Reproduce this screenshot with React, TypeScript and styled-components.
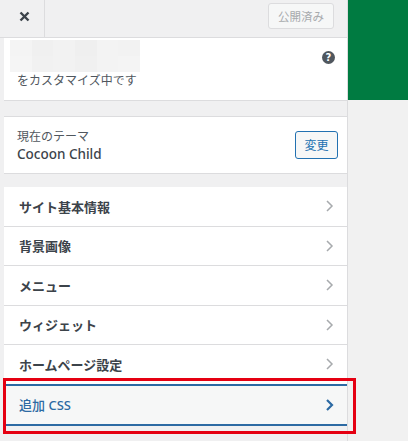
import React from "react";
import styled, { createGlobalStyle } from "styled-components";

const Global = createGlobalStyle`
  html, body { margin: 0; padding: 0; background: #f1f1f1; }
  body { font-family: "Noto Sans", "Noto Sans CJK JP", sans-serif; }
  * { box-sizing: border-box; }
`;

const Page = styled.div`
  display: flex;
  width: 408px;
  height: 441px;
  overflow: hidden;
`;

const Sidebar = styled.div`
  width: 348px;
  flex: none;
  background: #f0f0f1;
  border-right: 1px solid #dcdcde;
  display: flex;
  flex-direction: column;
`;

const Preview = styled.div`
  flex: 1;
  background: #f1f1f1;
`;

const GreenBar = styled.div`
  height: 100px;
  background: #007b41;
`;

const Header = styled.div`
  height: 38px;
  flex: none;
  display: flex;
  align-items: center;
  padding-left: 4px;
  padding-right: 13px;
  border-bottom: 1px solid #dcdcde;
`;

const CloseButton = styled.div`
  width: 41px;
  height: 37px;
  border-right: 1px solid #dcdcde;
  display: flex;
  align-items: center;
  justify-content: center;
  padding-bottom: 4px;
`;

const Spacer = styled.div`
  flex: 1;
`;

const PublishButton = styled.div`
  width: 66px;
  height: 26px;
  margin-top: -6px;
  border: 1px solid #dcdcde;
  border-radius: 3px;
  background: #f6f7f7;
  color: #a7aaad;
  font-size: 11.5px;
  display: flex;
  align-items: center;
  justify-content: center;
`;

const Panel = styled.div<{ $topBorder?: boolean }>`
  margin-left: 4px;
  flex: none;
  background: #fff;
  border-bottom: 1px solid #dcdcde;
  ${(p) => (p.$topBorder ? "border-top: 1px solid #dcdcde;" : "")}
`;

const InfoPanel = styled(Panel)`
  height: 63px;
  display: flex;
  padding: 2px 12px 0 13px;
`;

const InfoText = styled.div`
  flex: 1;
  display: flex;
  flex-direction: column;
`;

const Mosaic = styled.div`
  margin-left: -7px;
  width: 130px;
  height: 32px;
  display: grid;
  grid-template-columns: repeat(6, 1fr);
  grid-template-rows: 1fr 1fr;
`;

const Tile = styled.div<{ $c: string }>`
  background: ${(p) => p.$c};
`;

const Customizing = styled.div`
  font-size: 12px;
  line-height: 16px;
  margin-top: 1px;
  color: #50575e;
`;

const HelpIcon = styled.div`
  width: 13px;
  height: 13px;
  margin-top: 11px;
  border-radius: 50%;
  background: #50575e;
  color: #fff;
  font-family: "DejaVu Sans", sans-serif;
  font-weight: bold;
  font-size: 10px;
  line-height: 13px;
  text-align: center;
`;

const Gap = styled.div<{ $h: number }>`
  height: ${(p) => p.$h}px;
  flex: none;
`;

const ThemePanel = styled(Panel)`
  height: 58px;
  display: flex;
  align-items: center;
  padding: 0 9px 0 13px;
`;

const ThemeInfo = styled.div`
  flex: 1;
  display: flex;
  flex-direction: column;
`;

const ThemeLabel = styled.div`
  font-size: 12px;
  line-height: 17px;
  color: #50575e;
`;

const ThemeName = styled.div`
  font-size: 13.5px;
  line-height: 18px;
  font-weight: 500;
  color: #3c434a;
`;

const ChangeButton = styled.div`
  width: 43px;
  height: 28px;
  border: 1px solid #2271b1;
  border-radius: 3px;
  background: #f6f7f7;
  color: #2271b1;
  font-size: 12px;
  display: flex;
  align-items: center;
  justify-content: center;
`;

const MenuList = styled.div`
  display: flex;
  flex-direction: column;
`;

const MenuItem = styled.div<{ $active?: boolean }>`
  position: relative;
  flex: none;
  margin-left: 4px;
  height: 39.5px;
  display: flex;
  align-items: center;
  padding: 0 13px 0 15px;
  font-size: 13px;
  font-weight: ${(p) => (p.$active ? 500 : 700)};
  color: ${(p) => (p.$active ? "#2c6aa3" : "#3c434a")};
  background: ${(p) => (p.$active ? "#f6f7f7" : "#fff")};
  border-bottom: 1px solid #dcdcde;
  ${(p) =>
    p.$active
      ? `
    height: 42px;
    margin-top: -1px;
    border-top: 2px solid #2c6aa3;
    border-bottom: 2px solid #2c6aa3;
    border-left: 1px solid #2c6aa3;
    padding-left: 14px;
    &::after {
      content: "";
      position: absolute;
      left: -2px;
      top: -8px;
      right: -9px;
      bottom: -10px;
      border: 3px solid #e50012;
      pointer-events: none;
    }
  `
      : ""}
`;

const ItemLabel = styled.span`
  flex: 1;
`;

const Chevron = ({ active }: { active?: boolean }) => (
  <svg width="9" height="12" viewBox="0 0 9 12">
    <polyline
      points="2,1 7,6 2,11"
      fill="none"
      stroke={active ? "#2c6aa3" : "#a7aaad"}
      strokeWidth={active ? 2.2 : 1.5}
    />
  </svg>
);

const CloseIcon = () => (
  <svg width="11" height="11" viewBox="0 0 11 11">
    <path d="M1.5 1.5 L9.5 9.5 M9.5 1.5 L1.5 9.5" stroke="#3c434a" strokeWidth="2.4" />
  </svg>
);

const mosaicColors = [
  "#f4f4f4", "#f0f0f0", "#f2f2f2", "#efefef", "#f3f3f3", "#f2f2f2",
  "#f5f5f5", "#f1f1f1", "#f2f2f2", "#f0f0f0", "#f3f3f3", "#f4f4f4",
];

const items = ["サイト基本情報", "背景画像", "メニュー", "ウィジェット", "ホームページ設定"];

export default function App() {
  return (
    <>
      <Global />
      <Page>
        <Sidebar>
          <Header>
            <CloseButton>
              <CloseIcon />
            </CloseButton>
            <Spacer />
            <PublishButton>公開済み</PublishButton>
          </Header>
          <InfoPanel>
            <InfoText>
              <Mosaic>
                {mosaicColors.map((c, i) => (
                  <Tile key={i} $c={c} />
                ))}
              </Mosaic>
              <Customizing>をカスタマイズ中です</Customizing>
            </InfoText>
            <HelpIcon>?</HelpIcon>
          </InfoPanel>
          <Gap $h={15} />
          <ThemePanel $topBorder>
            <ThemeInfo>
              <ThemeLabel>現在のテーマ</ThemeLabel>
              <ThemeName>Cocoon Child</ThemeName>
            </ThemeInfo>
            <ChangeButton>変更</ChangeButton>
          </ThemePanel>
          <Gap $h={13} />
          <MenuList>
            {items.map((t) => (
              <MenuItem key={t}>
                <ItemLabel>{t}</ItemLabel>
                <Chevron />
              </MenuItem>
            ))}
            <MenuItem $active>
              <ItemLabel>追加 CSS</ItemLabel>
              <Chevron active />
            </MenuItem>
          </MenuList>
        </Sidebar>
        <Preview>
          <GreenBar />
        </Preview>
      </Page>
    </>
  );
}
